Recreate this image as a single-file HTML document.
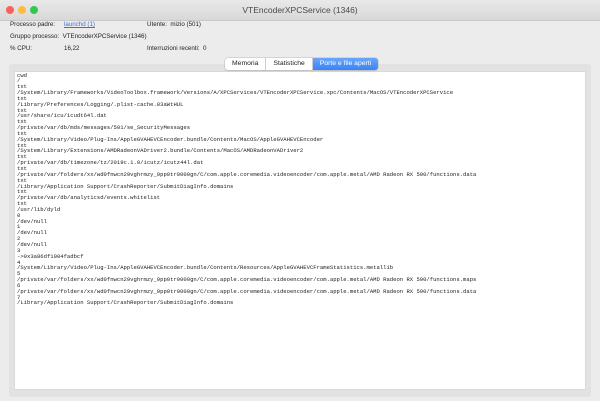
<!DOCTYPE html>
<html><head><meta charset="utf-8"><style>
body{margin:0;width:600px;height:401px;background:#ececec;font-family:"Liberation Sans",sans-serif;position:relative;overflow:hidden}
.title{position:absolute;left:0;top:0;width:600px;height:20px;background:linear-gradient(#e9e9e9,#d8d8d8);border-bottom:1px solid #c8c8c8;text-align:center;font-size:8.5px;line-height:21px;color:#4a4a4a}
.dot{position:absolute;top:6px;width:8px;height:8px;border-radius:50%}
.lbl{position:absolute;font-size:6.2px;color:#222}
.panel{position:absolute;left:9px;top:64px;width:582px;height:333px;background:#e2e2e2;border-radius:3px}
.tabs{position:absolute;left:225px;top:58px;height:12px;display:flex;border-radius:3px;box-shadow:0 0 0 0.5px #bbb,0 1px 1px rgba(0,0,0,.15);font-size:6.8px;overflow:hidden;background:#fff}
.tabs div{padding:0 7px;line-height:12px;color:#222;border-right:0.5px solid #ccc}
.tabs .on{background:linear-gradient(#6aa6fb,#3a83f6);color:#fff;border:0}
.txt{position:absolute;left:15px;top:72px;width:570px;height:317px;background:#fff;box-shadow:0 0 0 0.5px #d0d0d0}
pre{margin:0;position:absolute;left:2px;top:0.5px;font-family:"Liberation Mono",monospace;font-size:5.55px;line-height:5.85px;color:#222}
</style></head><body>
<div class="title">VTEncoderXPCService (1346)
<div class="dot" style="left:6px;background:#fc605b"></div><div class="dot" style="left:18px;background:#fdbc40"></div><div class="dot" style="left:30px;background:#34c84a"></div></div>
<div class="lbl" style="left:10px;top:21px">Processo padre:</div>
<div class="lbl" style="left:64px;top:21px;color:#3b6fd8;text-decoration:underline">launchd (1)</div>
<div class="lbl" style="left:147px;top:21px">Utente:&nbsp; mizio (501)</div>
<div class="lbl" style="left:10px;top:33px">Gruppo processo:&nbsp; VTEncoderXPCService (1346)</div>
<div class="lbl" style="left:10px;top:45px">% CPU:</div>
<div class="lbl" style="left:64px;top:45px">16,22</div>
<div class="lbl" style="left:147px;top:45px">Interruzioni recenti:&nbsp; 0</div>
<div class="panel"></div>
<div class="tabs"><div>Memoria</div><div>Statistiche</div><div class="on">Porte e file aperti</div></div>
<div class="txt"><pre>cwd
/
txt
/System/Library/Frameworks/VideoToolbox.framework/Versions/A/XPCServices/VTEncoderXPCService.xpc/Contents/MacOS/VTEncoderXPCService
txt
/Library/Preferences/Logging/.plist-cache.83aWtHUL
txt
/usr/share/icu/icudt64l.dat
txt
/private/var/db/mds/messages/501/se_SecurityMessages
txt
/System/Library/Video/Plug-Ins/AppleGVAHEVCEncoder.bundle/Contents/MacOS/AppleGVAHEVCEncoder
txt
/System/Library/Extensions/AMDRadeonVADriver2.bundle/Contents/MacOS/AMDRadeonVADriver2
txt
/private/var/db/timezone/tz/2019c.1.0/icutz/icutz44l.dat
txt
/private/var/folders/xx/wd0fnwcn29vghrmzy_9pp0tr0000gn/C/com.apple.coremedia.videoencoder/com.apple.metal/AMD Radeon RX 590/functions.data
txt
/Library/Application Support/CrashReporter/SubmitDiagInfo.domains
txt
/private/var/db/analyticsd/events.whitelist
txt
/usr/lib/dyld
0
/dev/null
1
/dev/null
2
/dev/null
3
-&gt;0x3a86df1004fadbcf
4
/System/Library/Video/Plug-Ins/AppleGVAHEVCEncoder.bundle/Contents/Resources/AppleGVAHEVCFrameStatistics.metallib
5
/private/var/folders/xx/wd0fnwcn29vghrmzy_9pp0tr0000gn/C/com.apple.coremedia.videoencoder/com.apple.metal/AMD Radeon RX 590/functions.maps
6
/private/var/folders/xx/wd0fnwcn29vghrmzy_9pp0tr0000gn/C/com.apple.coremedia.videoencoder/com.apple.metal/AMD Radeon RX 590/functions.data
7
/Library/Application Support/CrashReporter/SubmitDiagInfo.domains</pre></div>
</body></html>
